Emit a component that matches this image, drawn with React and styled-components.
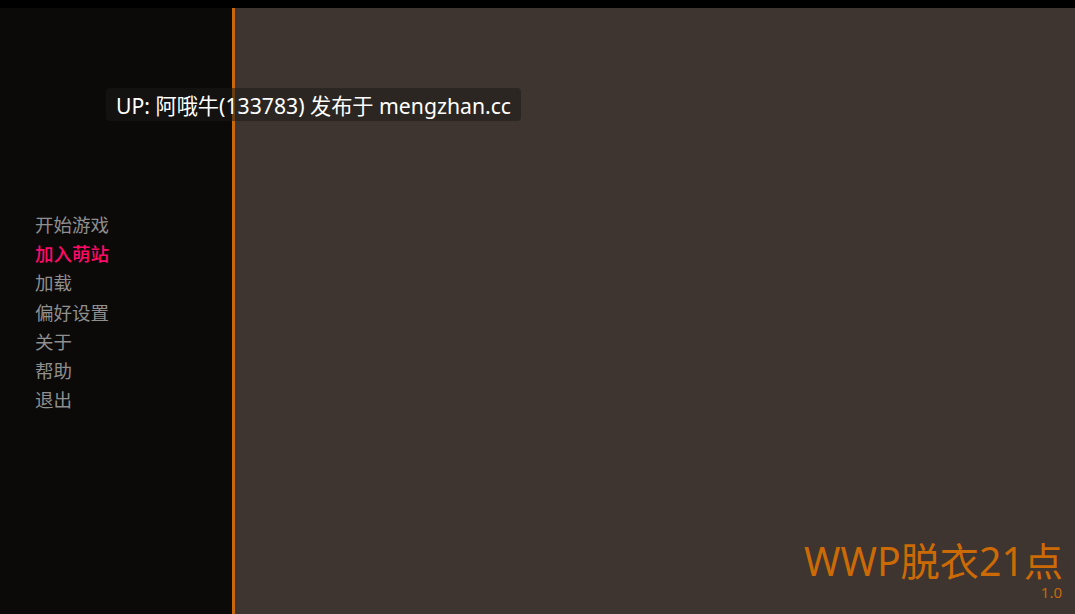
import React from "react";
import styled, { createGlobalStyle } from "styled-components";

const menu = ["开始游戏", "加入萌站", "加载", "偏好设置", "关于", "帮助", "退出"];

export default function App() {
  return (
    <>
      <GlobalStyle />
      <Screen>
        <TopBar />
        <Stage>
          <Sidebar>
            <Menu>
              {menu.map((label, i) => (
                <MenuItem key={label} active={i === 1}>
                  {label}
                </MenuItem>
              ))}
            </Menu>
          </Sidebar>
          <Divider />
          <Main>
            <Title>WWP脱衣21点</Title>
            <Version>1.0</Version>
          </Main>
          <Tooltip>UP: 阿哦牛(133783) 发布于 mengzhan.cc</Tooltip>
        </Stage>
      </Screen>
    </>
  );
}

const GlobalStyle = createGlobalStyle`
  html, body {
    margin: 0;
    padding: 0;
    background: #000;
  }
  body {
    font-family: "Noto Sans", "Noto Sans CJK SC", sans-serif;
  }
`;

const Screen = styled.div`
  width: 1075px;
  height: 614px;
  display: flex;
  flex-direction: column;
  overflow: hidden;
`;

const TopBar = styled.div`
  height: 8px;
  background: #000;
`;

const Stage = styled.div`
  position: relative;
  flex: 1;
  display: flex;
`;

const Sidebar = styled.div`
  width: 232px;
  background: #0b0a09;
  padding: 202px 0 0 35px;
  box-sizing: border-box;
`;

const Menu = styled.div`
  display: flex;
  flex-direction: column;
`;

const MenuItem = styled.div`
  font-family: "Noto Sans CJK SC", sans-serif;
  font-size: 18.5px;
  line-height: 29.2px;
  color: ${props => (props.active ? "#ff0a6a" : "#8f8f8f")};
  font-weight: ${props => (props.active ? 500 : 400)};
`;

const Divider = styled.div`
  width: 3px;
  background: #c8680a;
`;

const Main = styled.div`
  flex: 1;
  background: #3e3530;
  display: flex;
  flex-direction: column;
  justify-content: flex-end;
  align-items: flex-end;
  padding: 0 13px 14px 0;
`;

const Title = styled.div`
  font-family: "Noto Sans", "Noto Sans CJK SC", sans-serif;
  font-size: 39.2px;
  line-height: 40px;
  margin: 0 -1px 4px 0;
  color: #cc6a06;
`;

const Version = styled.div`
  font-family: "Noto Sans", sans-serif;
  font-size: 15px;
  line-height: 15px;
  color: #c8680a;
`;

const Tooltip = styled.div`
  position: absolute;
  left: 106px;
  top: 80px;
  height: 33px;
  padding: 0 10px;
  display: flex;
  align-items: center;
  border-radius: 4px;
  background: rgba(28, 25, 23, 0.55);
  color: #fff;
  font-size: 21.2px;
  white-space: nowrap;
  font-family: "Noto Sans", "Noto Sans CJK SC", sans-serif;
`;
